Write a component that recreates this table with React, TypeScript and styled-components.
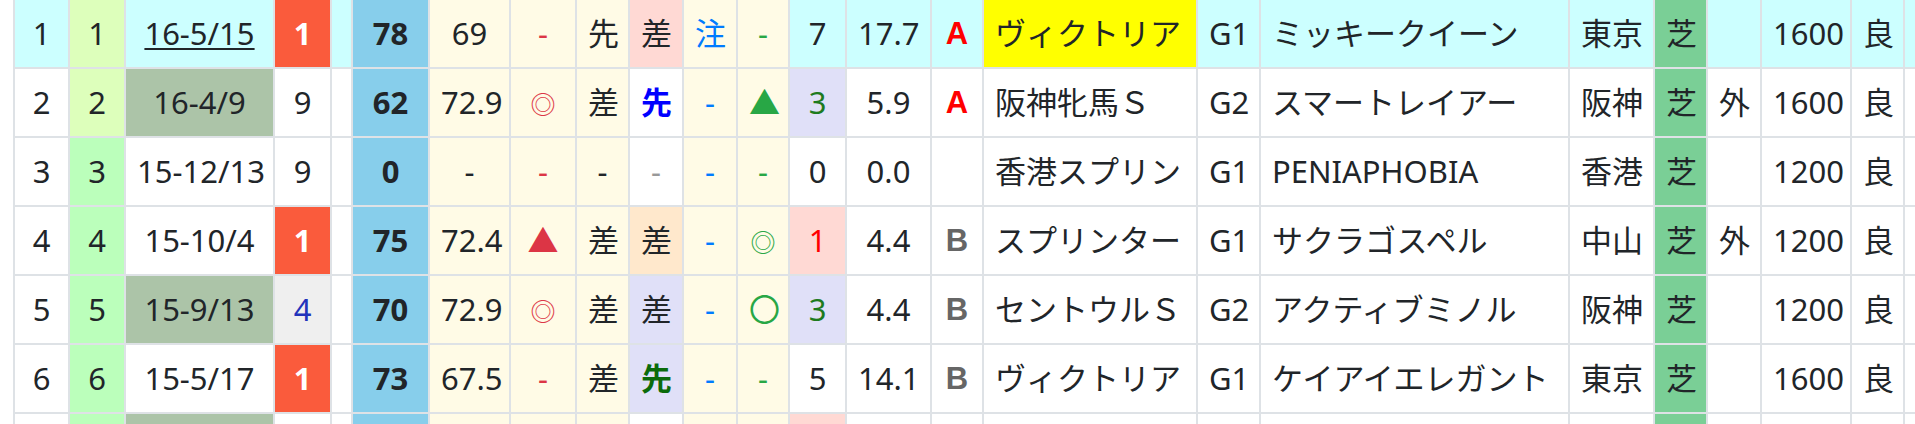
import React from 'react'
import styled, { createGlobalStyle } from 'styled-components'

const C = {
    line: '#dee2e6',
    ink: '#212529',
    cyan: '#ccffff',
    lime: '#ddffbb',
    green: '#bbffbb',
    sage: '#acc4a8',
    tomato: '#fa5b3c',
    grey: '#efefef',
    sky: '#87ceeb',
    cream: '#fffbe6',
    pink: '#ffd9d4',
    peach: '#ffe8cc',
    lavender: '#e0e0f8',
    turf: '#7acf96',
    yellow: '#ffff00',
    red: '#dc3545',
    blue: '#007bff',
    mint: '#28a745',
}

// column widths, measured from the sheet
const widths = [
    53, 54, 147, 55, 19, 75, 79, 64, 51, 52, 52, 50, 55, 83, 50, 212, 61, 307,
    83, 51, 52, 88, 51, 100,
]
const sheetWidth = widths.reduce((a, b) => a + b, 0) + (widths.length + 1) * 2

type Tone = { t: string; bg?: string; ink?: string; bold?: boolean }

interface Race {
    no: number
    label: string
    numBg: string
    date: string
    dateBg?: string
    link?: boolean
    rank: Tone
    score: string
    idx: string
    m1: Tone
    pos: string
    pos2: Tone
    m3: Tone
    m4: Tone
    pop: Tone
    odds: string
    grade: Tone
    race: string
    raceBg?: string
    g: string
    horse: string
    place: string
    surface: string
    course: string
    dist: string
    cond: string
    hi?: boolean
}

const dash = (ink: string): Tone => ({ t: '-', ink })
const empty: Tone = { t: '' }
const first: Tone = { t: '1', bg: C.tomato, ink: '#fff', bold: true }
const gradeA: Tone = { t: 'A', ink: '#ff0000' }
const gradeB: Tone = { t: 'B', ink: '#666' }

const races: Race[] = [
    {
        no: 1, label: '1', numBg: C.lime, date: '16-5/15', link: true, rank: first, score: '78', idx: '69',
        m1: dash(C.red), pos: '先', pos2: { t: '差', bg: C.pink }, m3: { t: '注', ink: C.blue },
        m4: dash(C.mint), pop: { t: '7' }, odds: '17.7', grade: gradeA, race: 'ヴィクトリア',
        raceBg: C.yellow, g: 'G1', horse: 'ミッキークイーン', place: '東京', surface: '芝', course: '',
        dist: '1600', cond: '良', hi: true,
    },
    {
        no: 2, label: '2', numBg: C.lime, date: '16-4/9', dateBg: C.sage, rank: { t: '9' }, score: '62', idx: '72.9',
        m1: { t: '◎', ink: C.red }, pos: '差', pos2: { t: '先', ink: '#0000ff', bold: true },
        m3: dash(C.blue), m4: { t: '▲', ink: C.mint }, pop: { t: '3', ink: '#1e7b1e', bg: C.lavender },
        odds: '5.9', grade: gradeA, race: '阪神牝馬Ｓ', g: 'G2', horse: 'スマートレイアー',
        place: '阪神', surface: '芝', course: '外', dist: '1600', cond: '良',
    },
    {
        no: 3, label: '3', numBg: C.green, date: '15-12/13', rank: { t: '9' }, score: '0', idx: '-',
        m1: dash(C.red), pos: '-', pos2: dash('#999'), m3: dash(C.blue), m4: dash(C.mint),
        pop: { t: '0' }, odds: '0.0', grade: empty, race: '香港スプリン', g: 'G1',
        horse: 'PENIAPHOBIA', place: '香港', surface: '芝', course: '', dist: '1200', cond: '良',
    },
    {
        no: 4, label: '4', numBg: C.green, date: '15-10/4', rank: first, score: '75', idx: '72.4',
        m1: { t: '▲', ink: C.red }, pos: '差', pos2: { t: '差', bg: C.peach }, m3: dash(C.blue),
        m4: { t: '◎', ink: C.mint }, pop: { t: '1', ink: '#ff0000', bg: C.pink }, odds: '4.4',
        grade: gradeB, race: 'スプリンター', g: 'G1', horse: 'サクラゴスペル', place: '中山',
        surface: '芝', course: '外', dist: '1200', cond: '良',
    },
    {
        no: 5, label: '5', numBg: C.green, date: '15-9/13', dateBg: C.sage, rank: { t: '4', ink: '#2233bb', bg: C.grey },
        score: '70', idx: '72.9', m1: { t: '◎', ink: C.red }, pos: '差', pos2: { t: '差', bg: C.lavender },
        m3: dash(C.blue), m4: { t: '〇', ink: C.mint }, pop: { t: '3', ink: '#1e7b1e', bg: C.lavender },
        odds: '4.4', grade: gradeB, race: 'セントウルＳ', g: 'G2', horse: 'アクティブミノル',
        place: '阪神', surface: '芝', course: '', dist: '1200', cond: '良',
    },
    {
        no: 6, label: '6', numBg: C.green, date: '15-5/17', rank: first, score: '73', idx: '67.5',
        m1: dash(C.red), pos: '差', pos2: { t: '先', ink: '#0b6b0b', bold: true, bg: C.lavender },
        m3: dash(C.blue), m4: dash(C.mint), pop: { t: '5' }, odds: '14.1', grade: gradeB,
        race: 'ヴィクトリア', g: 'G1', horse: 'ケイアイエレガント', place: '東京', surface: '芝', course: '',
        dist: '1600', cond: '良',
    },
    // the next row only shows its top edge in the view
    {
        no: 7, label: '', numBg: C.green, date: '', dateBg: C.sage, rank: empty, score: '', idx: '',
        m1: empty, pos: '', pos2: empty, m3: empty, m4: empty, pop: { t: '', bg: C.pink },
        odds: '', grade: empty, race: '', g: '', horse: '', place: '', surface: '', course: '',
        dist: '', cond: '',
    },
]

const GlobalStyle = createGlobalStyle`
    html, body {
        margin: 0;
        padding: 0;
        background: #fff;
        overflow: hidden;
    }
    body {
        font-family: 'Noto Sans', 'Noto Sans CJK JP', sans-serif;
        font-size: 31px;
        color: ${C.ink};
    }
`

const Frame = styled.div`
    width: 1915px;
    height: 424px;
    padding-left: 13px;
    box-sizing: border-box;
    overflow: hidden;
`

const Sheet = styled.table`
    margin-top: -2px;
    width: ${sheetWidth}px;
    table-layout: fixed;
    border-collapse: separate;
    border-spacing: 2px;
    background: ${C.line};
`

const Cell = styled.td<{ $bg?: string; $ink?: string; $bold?: boolean; $left?: boolean }>`
    box-sizing: border-box;
    height: 67px;
    padding: 0 11px;
    background: ${(p) => p.$bg ?? '#fff'};
    color: ${(p) => p.$ink ?? C.ink};
    font-weight: ${(p) => (p.$bold ? 700 : 400)};
    text-align: ${(p) => (p.$left ? 'left' : 'center')};
    vertical-align: middle;
    line-height: 1.5;
    white-space: nowrap;
    overflow: hidden;
`

const DateLink = styled.a`
    color: ${C.ink};
    text-decoration: underline;
    text-decoration-thickness: 2px;
    text-underline-offset: 3px;
    cursor: pointer;
`

const Glyph = styled.span<{ $small?: boolean }>`
    font-size: ${(p) => (p.$small ? '25px' : '31px')};
`

const Grade = styled.span`
    font-family: 'Liberation Sans', Arial, sans-serif;
    font-weight: 700;
`

const Mark = ({ tone, bg }: { tone: Tone; bg: string }) => (
    <Cell $bg={tone.bg ?? bg} $ink={tone.ink} $bold={tone.bold}>
        <Glyph $small={tone.t === '◎'}>{tone.t}</Glyph>
    </Cell>
)

const RaceRow = ({ r }: { r: Race }) => {
    const base = r.hi ? C.cyan : '#fff'
    return (
        <tr>
            <Cell $bg={base}>{r.label}</Cell>
            <Cell $bg={r.numBg}>{r.label}</Cell>
            <Cell $bg={r.dateBg ?? base}>
                {r.link ? <DateLink>{r.date}</DateLink> : r.date}
            </Cell>
            <Cell $bg={r.rank.bg ?? base} $ink={r.rank.ink} $bold={r.rank.bold}>
                {r.rank.t}
            </Cell>
            <Cell $bg={base} />
            <Cell $bg={C.sky} $bold>
                {r.score}
            </Cell>
            <Cell $bg={C.cream}>{r.idx}</Cell>
            <Mark tone={r.m1} bg={C.cream} />
            <Cell $bg={C.cream}>{r.pos}</Cell>
            <Mark tone={r.pos2} bg="#fff" />
            <Mark tone={r.m3} bg={C.cream} />
            <Mark tone={r.m4} bg={C.cream} />
            <Cell $bg={r.pop.bg ?? base} $ink={r.pop.ink}>
                {r.pop.t}
            </Cell>
            <Cell $bg={base}>{r.odds}</Cell>
            <Cell $bg={base} $ink={r.grade.ink}>
                <Grade>{r.grade.t}</Grade>
            </Cell>
            <Cell $bg={r.raceBg ?? base} $left>
                {r.race}
            </Cell>
            <Cell $bg={base}>{r.g}</Cell>
            <Cell $bg={base} $left>
                {r.horse}
            </Cell>
            <Cell $bg={base}>{r.place}</Cell>
            <Cell $bg={C.turf}>{r.surface}</Cell>
            <Cell $bg={base}>{r.course}</Cell>
            <Cell $bg={base}>{r.dist}</Cell>
            <Cell $bg={base}>{r.cond}</Cell>
            <Cell $bg={base} />
        </tr>
    )
}

export default function App() {
    return (
        <>
            <GlobalStyle />
            <Frame>
                <Sheet>
                    <colgroup>
                        {widths.map((w, i) => (
                            <col key={i} style={{ width: w }} />
                        ))}
                    </colgroup>
                    <tbody>
                        {races.map((r) => (
                            <RaceRow key={r.no} r={r} />
                        ))}
                    </tbody>
                </Sheet>
            </Frame>
        </>
    )
}
